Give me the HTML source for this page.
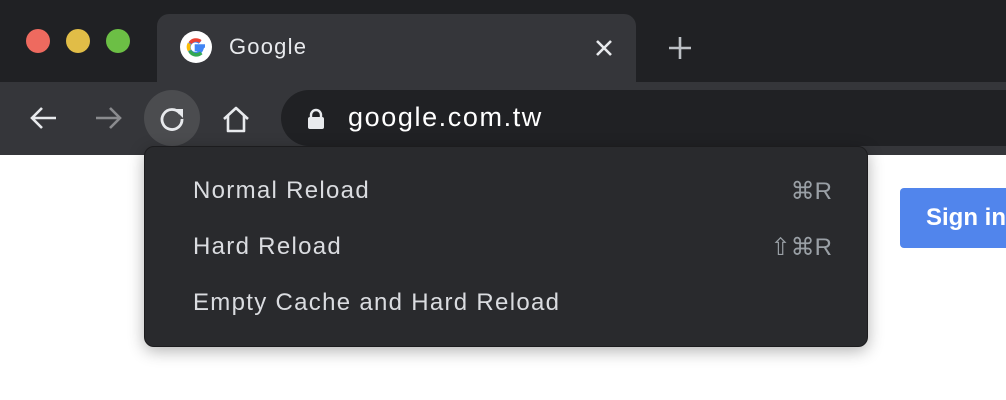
<!DOCTYPE html>
<html><head><style>
body{margin:0;width:1006px;height:400px;overflow:hidden;background:#fff;font-family:"Liberation Sans",sans-serif;position:relative}
.a{position:absolute}
</style></head><body>
<div class="a" style="left:0;top:0;width:1006px;height:82px;background:#202124"></div>
<div class="a" style="left:0;top:82px;width:1006px;height:73px;background:#35363a"></div>
<div class="a" style="left:157px;top:14px;width:479px;height:70px;background:#35363a;border-radius:12px 12px 0 0"></div>
<div class="a" style="left:26px;top:29px;width:24px;height:24px;border-radius:50%;background:#ee6a5f"></div>
<div class="a" style="left:66px;top:29px;width:24px;height:24px;border-radius:50%;background:#e1bd47"></div>
<div class="a" style="left:106px;top:29px;width:24px;height:24px;border-radius:50%;background:#6cbf45"></div>
<svg class="a" style="left:180px;top:31px" width="32" height="32" viewBox="0 0 32 32"><circle cx="16" cy="16" r="16" fill="#fff"/>
<path d="M25 15H16.5v3.5h5a6.5 6.5 0 1 1-1.6-7" fill="none" stroke="#4285f4" stroke-width="3.6"/>
<path d="M10.2 12A7.3 7.3 0 0 1 20.5 10.5" fill="none" stroke="#ea4335" stroke-width="3.6"/>
<path d="M9.4 19.5a7.3 7.3 0 0 1 0-7" fill="none" stroke="#fbbc05" stroke-width="3.6"/>
<path d="M9.8 19.8a7.3 7.3 0 0 0 11.5 2" fill="none" stroke="#34a853" stroke-width="3.6"/></svg>
<div class="a" style="left:229px;top:34px;color:#e8eaed;font-size:22px;letter-spacing:1.2px">Google</div>
<svg class="a" style="left:594px;top:38px" width="20" height="20"><path d="M3 3L17 17M17 3L3 17" stroke="#e8eaed" stroke-width="2.6"/></svg>
<svg class="a" style="left:667px;top:35px" width="26" height="26"><path d="M13 2V24M2 13H24" stroke="#bdc1c6" stroke-width="2.6"/></svg>
<svg class="a" style="left:28px;top:104px" width="32" height="28"><path d="M28 14H4M14 4L4 14L14 24" fill="none" stroke="#e8eaed" stroke-width="2.6"/></svg>
<svg class="a" style="left:92px;top:104px" width="32" height="28"><path d="M4 14H28M18 4L28 14L18 24" fill="none" stroke="#8a8b8e" stroke-width="2.6"/></svg>
<div class="a" style="left:144px;top:90px;width:56px;height:56px;border-radius:50%;background:#4b4c4f"></div>
<svg class="a" style="left:156px;top:102px" width="32" height="32"><path d="M24 11.5A10 10 0 1 0 26 17" fill="none" stroke="#e8eaed" stroke-width="2.8"/><path d="M18 7H27V16Z" fill="#e8eaed"/></svg>
<svg class="a" style="left:220px;top:104px" width="32" height="30"><path d="M4 15L16 4L28 15M8 12V27H24V12" fill="none" stroke="#e8eaed" stroke-width="2.6" stroke-linejoin="round"/></svg>
<div class="a" style="left:281px;top:90px;width:760px;height:56px;border-radius:28px;background:#202124"></div>
<svg class="a" style="left:306px;top:107px" width="20" height="24"><path d="M5 11V8a5 5 0 0 1 10 0v3" fill="none" stroke="#e8eaed" stroke-width="2.4"/><rect x="2" y="10" width="16" height="12" rx="2" fill="#e8eaed"/></svg>
<div class="a" style="left:348px;top:102px;color:#fff;font-size:27px;letter-spacing:1.6px">google.com.tw</div>
<div class="a" style="left:900px;top:188px;width:120px;height:60px;border-radius:4px;background:#5185ec;color:#fff;font-weight:bold;font-size:24px;line-height:60px;padding-left:26px;box-sizing:border-box">Sign in</div>
<div class="a" style="left:144px;top:146px;width:724px;height:201px;background:#292a2d;border-radius:10px;box-shadow:0 4px 16px rgba(0,0,0,.3);border:1px solid #1c1c1e;box-sizing:border-box;color:#dadce0;font-size:24px;letter-spacing:1.3px">
<div class="a" style="left:48px;top:30px">Normal Reload</div>
<div class="a" style="right:35px;top:30px;color:#9aa0a6;letter-spacing:0">⌘R</div>
<div class="a" style="left:48px;top:86px">Hard Reload</div>
<div class="a" style="right:35px;top:86px;color:#9aa0a6;letter-spacing:0">⇧⌘R</div>
<div class="a" style="left:48px;top:142px">Empty Cache and Hard Reload</div>
</div>
</body></html>
